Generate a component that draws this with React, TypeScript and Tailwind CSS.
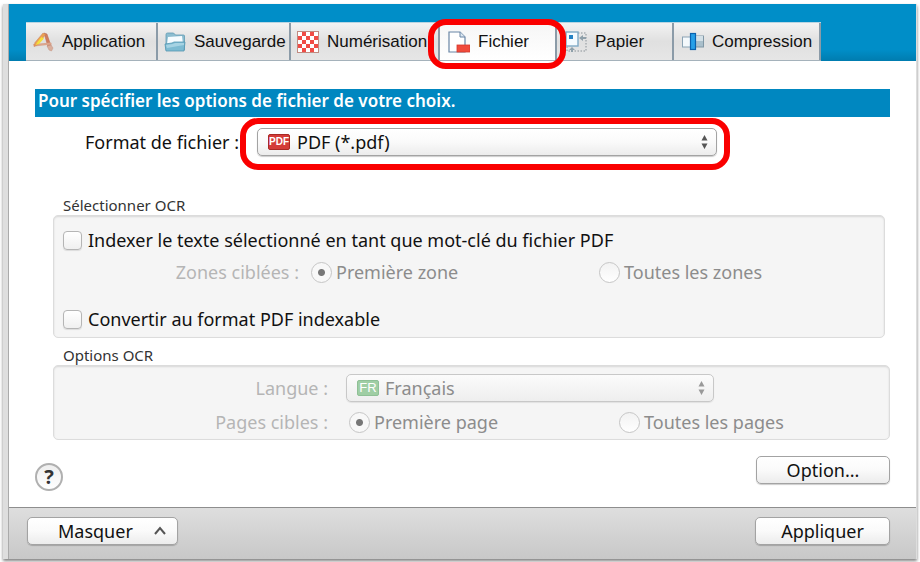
import { useState } from "react";
import type { ReactNode } from "react";

interface Tab {
  id: string;
  label: string;
  size: string;
  icon: ReactNode;
}

const ApplicationIcon = () => (
  <svg width="22" height="22" viewBox="0 0 22 22" aria-hidden="true">
    <path d="M12 2l3 1 4 12-3 1z" fill="#cf7d5e" stroke="#b8664a" strokeWidth="0.5" />
    <path d="M1 13l18-1.500 1 2-18 2z" fill="#dba58c" />
    <path d="M11 2l2.500 1.500L6 13.500l-4 2 1-4z" fill="#eba053" stroke="#c98158" strokeWidth="0.5" />
    <path d="M9.500 6l2.500 1.500-5 5.500-3 1 1-2.500z" fill="#f4df3c" />
    <path d="M15 15l4-1 2 3-1.500 3-2.500-1z" fill="#d9ae9b" stroke="#c49380" strokeWidth="0.5" />
  </svg>
);

const FolderIcon = () => (
  <svg width="22" height="22" viewBox="0 0 22 22" aria-hidden="true">
    <path d="M2 3.500Q2 2 3.500 2h6l2 2h8q1 0 1 1v14H2z" fill="#8cbdd0" stroke="#5f9ab2" strokeWidth="0.8" />
    <path d="M4 6l14-1 1 8H3z" fill="#f6fcff" />
    <path d="M1 13l7-1 2-1h11l-1 9H2z" fill="#7dbbd2" stroke="#5597b1" strokeWidth="0.8" />
    <path d="M2 14l7-1 2-1h9v2L3 17z" fill="#a6d3e3" />
  </svg>
);

const CheckerIcon = () => (
  <svg width="22" height="22" viewBox="0 0 22 22" aria-hidden="true">
    <rect x="0.500" y="0.500" width="21" height="21" fill="#fff" stroke="#c08a80" />
    <path
      d="M5 1h4v4H5zM13 1h4v4h-4zM1 5h4v4H1zM9 5h4v4H9zM17 5h4v4h-4zM5 9h4v4H5zM13 9h4v4h-4zM1 13h4v4H1zM9 13h4v4H9zM17 13h4v4h-4zM5 17h4v4H5zM13 17h4v4h-4z"
      fill="#f04c46"
    />
  </svg>
);

const FileIcon = () => (
  <svg width="22" height="22" viewBox="0 0 22 22" aria-hidden="true">
    <path d="M1 1h11l5 5v15H1z" fill="#fff" stroke="#6985a5" strokeWidth="1.2" />
    <path d="M12 1v5h5" fill="#dce8f2" stroke="#6985a5" />
    <rect x="9" y="14" width="13" height="7" fill="#f04b3c" stroke="#d4372c" strokeWidth="0.8" />
  </svg>
);

const PaperIcon = () => (
  <svg width="22" height="22" viewBox="0 0 22 22" aria-hidden="true">
    <path d="M13 2h8v18H2v-5" fill="none" stroke="#8a9298" strokeDasharray="1.500 1.500" />
    <rect x="1" y="1" width="12" height="14" fill="#f5fbff" stroke="#7faac6" strokeWidth="1.4" />
    <rect x="4" y="4" width="4" height="4" fill="#2482c4" />
    <path d="M14 7l4-3v2h3v2h-3v2zM7 16l3 3H8v2H6v-2H4z" fill="#8fa0aa" />
  </svg>
);

const CompressionIcon = () => (
  <svg width="22" height="22" viewBox="0 0 22 22" aria-hidden="true">
    <rect x="0.500" y="6" width="10" height="10" fill="#f4f9fc" stroke="#8ba4b5" />
    <rect x="12" y="5" width="9.500" height="11" fill="#a9bfcb" stroke="#8097a5" />
    <path d="M12 5h9v5h-9z" fill="#d3e0e7" />
    <rect x="8.500" y="2.500" width="5" height="16" fill="#27a0e8" stroke="#0a62ae" strokeWidth="1.200" />
  </svg>
);

const tabs: Tab[] = [
  { id: "application", label: "Application", size: "w-[132px] pl-[6px]", icon: <ApplicationIcon /> },
  { id: "sauvegarde", label: "Sauvegarde", size: "w-[133px] pl-[6px]", icon: <FolderIcon /> },
  { id: "numerisation", label: "Numérisation", size: "w-[149px] pl-[6px]", icon: <CheckerIcon /> },
  { id: "fichier", label: "Fichier", size: "w-[117px] pl-2", icon: <FileIcon /> },
  { id: "papier", label: "Papier", size: "w-[117px] pl-2", icon: <PaperIcon /> },
  { id: "compression", label: "Compression", size: "w-[147px] pl-2", icon: <CompressionIcon /> },
];

const Arrows = () => (
  <svg
    className="pointer-events-none absolute top-[6px] right-2"
    width="9"
    height="16"
    viewBox="0 0 9 16"
    aria-hidden="true"
  >
    <path d="M4.500 1l3 5.500h-6zM4.500 15l-3-5.500h6z" fill="currentColor" />
  </svg>
);

const buttonStyle =
  "h-7 rounded-[5px] border border-[#a3a3a3] bg-linear-to-b from-white via-[#fafafa] to-[#ececec] leading-6 shadow-[0_1px_1px_rgba(0,0,0,0.2)]";
const boxStyle =
  "rounded-[5px] border border-[#dcdcdc] bg-[#f5f5f5] shadow-[inset_0_1px_2px_rgba(0,0,0,0.12)]";
const radioStyle =
  "size-[21px] shrink-0 appearance-none rounded-full border border-[#c6c6c6] bg-linear-to-b from-[#f2f2f2] to-white checked:bg-[radial-gradient(circle,#777_3px,#f8f8f8_4px)]";

interface RadioProps {
  name: string;
  label: string;
  checked: boolean;
}

const Radio = ({ name, label, checked }: RadioProps) => (
  <label className="flex h-6 items-center gap-1 text-[#8c8c8c]">
    <input type="radio" name={name} defaultChecked={checked} disabled className={radioStyle} />
    {label}
  </label>
);

const Check = ({ label }: { label: string }) => (
  <label className="ml-[9px] flex h-6 items-center gap-[6px]">
    <input
      type="checkbox"
      className="size-[19px] shrink-0 appearance-none rounded-[4px] border border-[#b5b5b5] bg-linear-to-b from-white to-[#f0f0f0] shadow-[0_1px_1px_rgba(0,0,0,0.1)] checked:bg-[#777]"
    />
    {label}
  </label>
);

const App = () => {
  const [active, setActive] = useState("fichier");

  return (
    <div className="overflow-hidden bg-white pt-1 pr-[3px] pb-[3px] pl-[3px] font-['Noto_Sans','Open_Sans',sans-serif] text-lg leading-6 text-[#111]">
      <div className="border-l-5 border-[#dedede] shadow-[0_2px_3px_rgba(0,0,0,0.5)]">
        <div className="border-r border-l border-r-[#ddd] border-l-[#aaa]">
          <header className="bg-linear-to-b from-[#008ec8] via-[#008ec8] via-80% to-[#007caf] pt-[18px] pl-[17px]">
            <div
              role="tablist"
              className="flex h-[39px] w-fit border-t border-b border-t-[#b9d5e2] border-b-[#a5b2bb] font-['Liberation_Sans',Arial,sans-serif] text-[17px]"
            >
              {tabs.map((tab) => (
                <div key={tab.id} className="relative">
                  <button
                    role="tab"
                    aria-selected={active === tab.id}
                    onClick={() => setActive(tab.id)}
                    className={`flex h-full items-center gap-2 border-r-2 border-[#8b9ba8] whitespace-nowrap ${tab.size} ${
                      active === tab.id
                        ? "bg-linear-to-b from-[#f6f6f6] to-white"
                        : "bg-linear-to-b from-[#f3f3f3] via-[#e0e0e0] to-[#e6e6e6]"
                    }`}
                  >
                    <span className="shrink-0">{tab.icon}</span>
                    {tab.label}
                  </button>
                  {active === tab.id && (
                    <div className="pointer-events-none absolute -top-1 -right-[9px] z-10 h-[50px] w-[138px] rounded-[18px] border-6 border-[#fa0000]" />
                  )}
                </div>
              ))}
            </div>
          </header>

          <main className="pt-7 pr-[26px] pb-4 pl-[26px]">
            <h1 className="h-7 bg-[#0087c0] pl-[3px] text-[17px] leading-6 font-semibold text-white">
              Pour spécifier les options de fichier de votre choix.
            </h1>

            <div className="mt-[11px] flex items-center">
              <label htmlFor="format" className="w-[204px] text-right">
                Format de fichier :
              </label>
              <div className="relative ml-[18px] w-[460px] text-[#555]">
                <select id="format" className={`${buttonStyle} w-full appearance-none pl-[39px] text-[#111]`}>
                  <option>PDF (*.pdf)</option>
                </select>
                <span className="pointer-events-none absolute top-[6px] left-[11px] flex h-4 w-[22px] items-center justify-center rounded-[2px] border border-[#a92824] bg-[#d43c38] font-['Liberation_Sans',sans-serif] text-[10px] font-bold text-white">
                  PDF
                </span>
                <Arrows />
                <div className="pointer-events-none absolute -top-[10px] -right-[13px] -left-[17px] h-[52px] rounded-[18px] border-6 border-[#fa0000]" />
              </div>
            </div>

            <section className="mt-[39px] pr-[5px] pl-[18px]">
              <h2 className="pl-[10px] text-[15px] leading-5 text-[#333]">Sélectionner OCR</h2>
              <div className={`${boxStyle} pt-3 pb-[6px]`}>
                <Check label="Indexer le texte sélectionné en tant que mot-clé du fichier PDF" />
                <div className="mt-2 grid grid-cols-[245px_276px_1fr] gap-x-3">
                  <span className="text-right text-[#b5b5b5]">Zones ciblées :</span>
                  <Radio name="zone" label="Première zone" checked />
                  <Radio name="zone" label="Toutes les zones" checked={false} />
                </div>
                <div className="mt-[23px]">
                  <Check label="Convertir au format PDF indexable" />
                </div>
              </div>
            </section>

            <section className="mt-[7px] pl-[18px]">
              <h2 className="pl-[10px] text-[15px] leading-5 text-[#333]">Options OCR</h2>
              <div className={`${boxStyle} pt-2 pb-[5px]`}>
                <div className="flex items-center">
                  <label htmlFor="langue" className="w-[274px] text-right text-[#b5b5b5]">
                    Langue :
                  </label>
                  <div className="relative ml-[18px] w-[368px] text-[#999]">
                    <select
                      id="langue"
                      disabled
                      className="h-7 w-full appearance-none rounded-[5px] border border-[#c8c8c8] bg-linear-to-b from-[#fbfbfb] to-[#eee] pl-[38px] leading-6 text-[#8c8c8c] opacity-100 shadow-[0_1px_1px_rgba(0,0,0,0.08)]"
                    >
                      <option>Français</option>
                    </select>
                    <span className="pointer-events-none absolute top-[6px] left-[11px] flex h-4 w-[22px] items-center justify-center rounded-[2px] border border-[#8fc096] bg-[#9fcea4] font-['Liberation_Sans',sans-serif] text-[13px] text-white">
                      FR
                    </span>
                    <Arrows />
                  </div>
                </div>
                <div className="mt-2 grid grid-cols-[274px_249px_1fr] gap-x-[21px]">
                  <span className="text-right text-[#b5b5b5]">Pages cibles :</span>
                  <Radio name="page" label="Première page" checked />
                  <Radio name="page" label="Toutes les pages" checked={false} />
                </div>
              </div>
            </section>

            <div className="mt-4 flex h-[35px] justify-between">
              <button
                aria-label="Aide"
                className="size-7 self-end rounded-full border-2 border-[#b0b0b0] bg-linear-to-b from-[#eee] to-white text-xl leading-6 font-bold text-[#333]"
              >
                ?
              </button>
              <button className={`${buttonStyle} w-[134px]`}>Option...</button>
            </div>
          </main>

          <footer className="flex justify-between border-t border-[#8e8e8e] bg-linear-to-b from-[#dedede] to-[#c8c8c8] pt-[9px] pr-[26px] pb-[14px] pl-[18px]">
            <button className={`${buttonStyle} flex w-[151px] items-center justify-between pr-[10px] pl-[30px]`}>
              Masquer
              <svg width="14" height="10" viewBox="0 0 14 10" aria-hidden="true">
                <path d="M2 8l5-6 5 6" fill="none" stroke="#555" strokeWidth="2" />
              </svg>
            </button>
            <button className={`${buttonStyle} w-[135px]`}>Appliquer</button>
          </footer>
        </div>
      </div>
    </div>
  );
};

export default App;
